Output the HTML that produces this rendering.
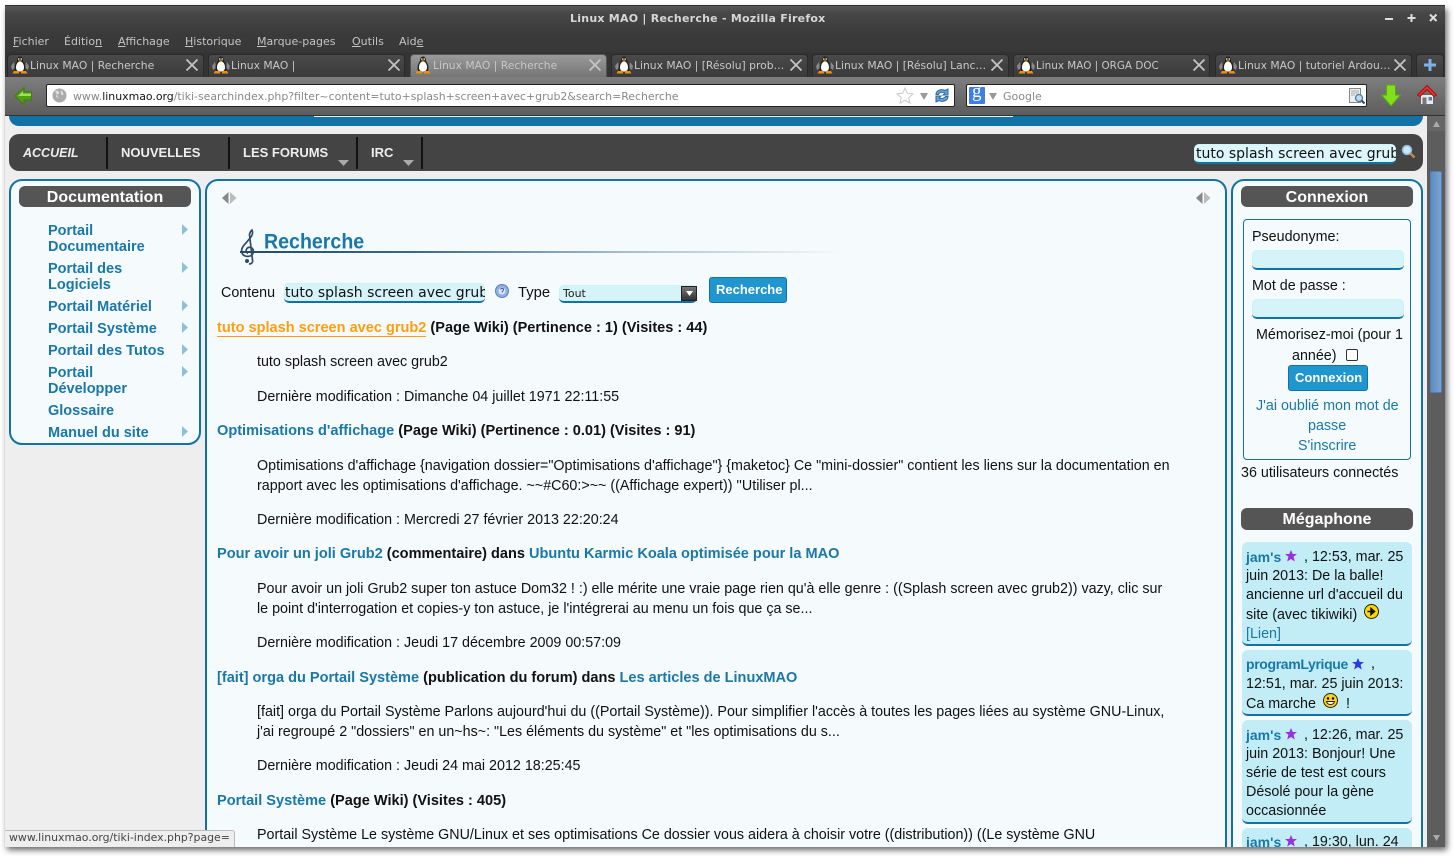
<!DOCTYPE html>
<html><head><meta charset="utf-8"><title>Linux MAO | Recherche - Mozilla Firefox</title>
<style>
html,body{margin:0;padding:0;width:1454px;height:856px;background:#fff;overflow:hidden}
#sh{position:absolute;left:5px;top:6px;width:1440px;height:841px;box-shadow:2px 3px 6px rgba(0,0,0,.6)}
#w{position:absolute;left:0;top:0;width:1454px;height:856px;clip-path:inset(5px 9px 9px 5px);background:#eee;overflow:hidden}
#w div,#w span.a,#w svg.a{position:absolute}
.t{position:absolute;white-space:nowrap;line-height:20px;font-family:"Liberation Sans",sans-serif;font-size:14.3px;color:#111;margin-top:1px}
.t.d{font-family:"DejaVu Sans",sans-serif;font-size:11px;margin-top:0}
.t.b{font-weight:bold;font-size:14.55px}
.t.n{margin-top:0}
b{font-size:14px}
.l{color:#1a78a8}
.t.m{font-weight:bold;color:#1a78a8;left:48px;font-size:14.5px;margin-top:0}
.tab{top:54px;height:23px;width:197px;box-sizing:border-box;border:1px solid #2a2a2a;border-bottom:none;border-radius:4px 4px 0 0;background:linear-gradient(#4a4a4a,#3a3a3a)}
.tab.on{background:linear-gradient(#9a9a9a,#757575);border-color:#555}
.hd{background:#555;border-radius:6px;color:#fff;font:bold 16px/23px "Liberation Sans",sans-serif;text-align:center;height:21px}
.panel{box-sizing:border-box;border:2px solid #1272a6;border-radius:13px;background:#f5fafc}
.inp{background:#d5f3f9;border-bottom:2px solid #1272a6;border-radius:5px;box-sizing:border-box;box-shadow:inset 0 0 1px #8fd}
.msg{left:1242px;width:170px;background:#c2edf7;border-bottom:2px solid #1272a6;border-radius:6px;box-sizing:border-box}
.sep{width:2px;top:137px;height:32px;background:#111}
.t.tt{top:56px;color:#c8c8c8;font-size:10.75px}
</style></head><body>
<svg width="0" height="0" style="position:absolute"><defs>
<symbol id="p" viewBox="0 0 18 18"><path d="M3 6L0 10l1 4 3-2zM15 6l3 4-1 4-3-2z" fill="#888"/><path d="M9 .5C6.500 .5 6 3 6 5 4.500 7 3.500 9.500 3.500 12c0 1.500 .5 3 1 3.500h9c.5-.5 1-2 1-3.500 0-2.500-1-5-2.500-7 0-2-.5-4.500-3-4.500z" fill="#222"/><path d="M9 5.500c2.500 0 4 3 4 6S11 15.500 9 15.500s-4-1-4-4 1.500-6 4-6z" fill="#fff"/><path d="M7 4.500h4L9 6.500z" fill="#f5a000"/><path d="M3 15h5v2.500H1.500zM10 15h5l1.500 2.500H10z" fill="#f59000"/><circle cx="7.800" cy="3" r=".8" fill="#fff"/><circle cx="10.200" cy="3" r=".8" fill="#fff"/></symbol>
<symbol id="x" viewBox="0 0 12 12"><path d="M.5.500l11 11M11.500.500l-11 11" stroke="#c4c4c4" stroke-width="1.800" fill="none"/></symbol>
<symbol id="st" viewBox="0 0 12 12"><path d="M6 0l1.700 4h4.300L8.600 6.800 9.800 11.500 6 9 2.200 11.500 3.400 6.800 0 4h4.300z"/></symbol>
</defs></svg>
<div id="sh"></div>
<div id="w">
<!-- title + tabs -->
<div style="left:5px;top:5px;width:1440px;height:49px;background:linear-gradient(#5a5a5a 0,#474747 8px,#3a3a3a 30px,#383838)"></div>
<div style="left:5px;top:5px;width:1440px;height:1px;background:#333"></div>
<div style="left:5px;top:52px;width:1440px;height:25px;background:#343434"></div>
<span class="t d" style="left:570px;top:8.500px;color:#d6d6d6;letter-spacing:.24px;font-weight:bold">Linux MAO | Recherche - Mozilla Firefox</span>
<svg class="a" style="left:1384px;top:12px" width="54" height="12"><path d="M1 7h8" stroke="#ddd" stroke-width="2"/><path d="M27.500 2v8M23.500 6h8" stroke="#ddd" stroke-width="2"/><path d="M46 2.500l6.500 6.500M52.500 2.500L46 9" stroke="#ddd" stroke-width="2"/></svg>
<span class="t d" style="left:13px;top:32px;color:#c4c4c4"><u>F</u>ichier</span>
<span class="t d" style="left:64px;top:32px;color:#c4c4c4">Éditio<u>n</u></span>
<span class="t d" style="left:118px;top:32px;color:#c4c4c4"><u>A</u>ffichage</span>
<span class="t d" style="left:185px;top:32px;color:#c4c4c4"><u>H</u>istorique</span>
<span class="t d" style="left:257px;top:32px;color:#c4c4c4"><u>M</u>arque-pages</span>
<span class="t d" style="left:352px;top:32px;color:#c4c4c4"><u>O</u>utils</span>
<span class="t d" style="left:399px;top:32px;color:#c4c4c4">Aid<u>e</u></span>

<div class="tab" style="left:7px"></div><div class="tab" style="left:208px"></div><div class="tab on" style="left:410px"></div><div class="tab" style="left:611px"></div><div class="tab" style="left:812px"></div><div class="tab" style="left:1013px"></div><div class="tab" style="left:1215px;width:197px"></div><div class="tab" style="left:1416px;width:28px"></div>
<svg class="a" style="left:11px;top:56px" width="18" height="18"><use href="#p"/></svg>
<svg class="a" style="left:212px;top:56px" width="18" height="18"><use href="#p"/></svg>
<svg class="a" style="left:414px;top:56px" width="18" height="18"><use href="#p"/></svg>
<svg class="a" style="left:615px;top:56px" width="18" height="18"><use href="#p"/></svg>
<svg class="a" style="left:816px;top:56px" width="18" height="18"><use href="#p"/></svg>
<svg class="a" style="left:1017px;top:56px" width="18" height="18"><use href="#p"/></svg>
<svg class="a" style="left:1219px;top:56px" width="18" height="18"><use href="#p"/></svg>
<span class="t d tt" style="left:30px">Linux MAO | Recherche</span>
<span class="t d tt" style="left:231px">Linux MAO |</span>
<span class="t d tt" style="left:433px">Linux MAO | Recherche</span>
<span class="t d tt" style="left:634px">Linux MAO | [Résolu] prob…</span>
<span class="t d tt" style="left:835px">Linux MAO | [Résolu] Lanc…</span>
<span class="t d tt" style="left:1036px;font-size:10.4px">Linux MAO | ORGA DOC</span>
<span class="t d tt" style="left:1238px">Linux MAO | tutoriel Ardou…</span>
<svg class="a" style="left:186px;top:59px" width="12" height="12"><use href="#x"/></svg>
<svg class="a" style="left:388px;top:59px" width="12" height="12"><use href="#x"/></svg>
<svg class="a" style="left:589px;top:59px" width="12" height="12"><use href="#x"/></svg>
<svg class="a" style="left:790px;top:59px" width="12" height="12"><use href="#x"/></svg>
<svg class="a" style="left:991px;top:59px" width="12" height="12"><use href="#x"/></svg>
<svg class="a" style="left:1193px;top:59px" width="12" height="12"><use href="#x"/></svg>
<svg class="a" style="left:1394px;top:59px" width="12" height="12"><use href="#x"/></svg>
<svg class="a" style="left:1424px;top:59px" width="12" height="12"><path d="M6 0v12M0 6h12" stroke="#7fb2ea" stroke-width="3"/></svg>

<!-- toolbar -->
<div style="left:5px;top:77px;width:1440px;height:39px;background:linear-gradient(#7e7e7e,#5c5c5c)"></div>
<div style="left:5px;top:115px;width:1440px;height:1px;background:#333"></div>
<svg class="a" style="left:14px;top:86px" width="19" height="20"><path d="M1 10L10 1.500V6h7.500v8H10v4.500z" fill="#4fa012" stroke="#3d7d10" stroke-width="1"/><path d="M4 10l5-5v2.500h8V10z" fill="#9ee05a"/></svg>
<div style="left:46px;top:84px;width:909px;height:23px;background:#fff;border:1px solid #222;box-sizing:border-box;border-radius:2px"></div>
<svg class="a" style="left:52px;top:88px" width="15" height="15"><circle cx="7.500" cy="7.500" r="7" fill="#aaa"/><path d="M3 3c2-1 4 0 4 2S4 6 4 8s3 1 3 3M9 2c2 2 3 4 2 5S8 6 9 2" fill="#ddd"/></svg>
<span class="t d" style="left:73px;top:87px;color:#888;font-size:10.92px">www.<span style="color:#111">linuxmao.org</span>/tiki-searchindex.php?filter~content=tuto+splash+screen+avec+grub2&amp;search=Recherche</span>
<svg class="a" style="left:896px;top:87px" width="18" height="17"><path d="M9 1l2.300 5.300 5.700.5-4.300 3.800 1.300 5.600L9 13.200 4 16.200l1.300-5.600L1 6.800l5.700-.5z" fill="#fff" stroke="#ccc"/></svg>
<svg class="a" style="left:920px;top:93px" width="9" height="7"><path d="M0 0h8L4 7z" fill="#999"/></svg>
<svg class="a" style="left:934px;top:87px" width="16" height="17"><path d="M2 7.500c0-4 5-6 9-4l3-1.500v6H9l2-2C8 4.500 5 5.500 4.500 7.500zM14 9.500c0 4-5 6-9 4l-3 1.500V9h5l-2 2c3 1 6 0 6.500-1.500z" fill="#6aa4d8" stroke="#2a67a3"/></svg>
<div style="left:966px;top:84px;width:401px;height:23px;background:#fff;border:1px solid #222;box-sizing:border-box;border-radius:2px"></div>
<div style="left:969px;top:87px;width:16px;height:17px;background:#3f7de8;border-radius:1px"></div>
<span class="t n" style="left:972px;top:82px;color:#fff;font:19px/20px 'Liberation Serif',serif">g</span>
<svg class="a" style="left:989px;top:93px" width="9" height="7"><path d="M0 0h8L4 7z" fill="#999"/></svg>
<span class="t d" style="left:1003px;top:87px;color:#888">Google</span>
<svg class="a" style="left:1349px;top:88px" width="17" height="17"><path d="M.5.500h11v14H.5z" fill="#eee" stroke="#888"/><path d="M2 3h8M2 5h8M2 7h4" stroke="#aaa"/><circle cx="10" cy="10" r="3.500" fill="#bcd9f0" stroke="#4d7ea8" stroke-width="1.300"/><path d="M12.500 12.500l3 3" stroke="#345" stroke-width="2"/></svg>
<svg class="a" style="left:1381px;top:84px" width="20" height="23"><path d="M5.500 1h9v10h5L10 22 .5 11h5z" fill="#82df1e" stroke="#59a813"/></svg>
<svg class="a" style="left:1417px;top:84px" width="20" height="22"><path d="M3.500 10.500h13v10h-13z" fill="#eaeaea" stroke="#666"/><path d="M.5 11L10 1.500l9.500 9.500-2.500 1.500L10 5.500 3 12.500z" fill="#f03030" stroke="#a01010"/><path d="M11.500 13h3.500v3.500h-3.500z" fill="#5582ad"/><path d="M5.500 13.500h4v7h-4z" fill="#777"/></svg>

<!-- page top -->
<div style="left:9px;top:116px;width:1414px;height:10px;background:#1272a6;border-radius:0 0 10px 10px"></div>
<div style="left:314px;top:116px;width:699px;height:1px;background:#e8f2f6"></div>
<div style="left:9px;top:134px;width:1414px;height:37px;background:#444;border-radius:10px"></div>
<span class="t n" style="left:23px;top:143px;color:#eee;font-size:12.5px;font-weight:bold;font-style:italic">ACCUEIL</span>
<span class="t n" style="left:121px;top:143px;color:#eee;font-size:13px;font-weight:bold">NOUVELLES</span>
<span class="t n" style="left:243px;top:143px;color:#eee;font-size:13px;font-weight:bold">LES FORUMS</span>
<span class="t n" style="left:371px;top:143px;color:#eee;font-size:13px;font-weight:bold">IRC</span>
<div class="sep" style="left:106px"></div><div class="sep" style="left:228px"></div><div class="sep" style="left:356px"></div><div class="sep" style="left:421px"></div>
<svg class="a" style="left:338px;top:160px" width="11" height="6"><path d="M0 0h11L5.500 6z" fill="#aaa"/></svg>
<svg class="a" style="left:403px;top:160px" width="11" height="6"><path d="M0 0h11L5.500 6z" fill="#aaa"/></svg>
<div class="inp" style="left:1194px;top:144px;width:202px;height:20px;background:#dcf6fb;overflow:hidden"><span class="t d" style="left:2px;top:0;font-size:14px;color:#111">tuto splash screen avec grub2</span></div>
<svg class="a" style="left:1401px;top:144px" width="15" height="15"><circle cx="6" cy="6" r="4.500" fill="#cfe6fa" stroke="#8ab8e0" stroke-width="1.500"/><path d="M9.500 9.500l4 4" stroke="#c08a3a" stroke-width="2.500"/></svg>

<!-- left panel -->
<div class="panel" style="left:9px;top:179px;width:192px;height:266px"></div>
<div class="hd" style="left:19px;top:186px;width:172px">Documentation</div>
<span class="t m" style="top:221px">Portail</span>
<span class="t m" style="top:237px">Documentaire</span>
<span class="t m" style="top:259px">Portail des</span>
<span class="t m" style="top:275px">Logiciels</span>
<span class="t m" style="top:297px">Portail Matériel</span>
<span class="t m" style="top:319px">Portail Système</span>
<span class="t m" style="top:341px">Portail des Tutos</span>
<span class="t m" style="top:363px">Portail</span>
<span class="t m" style="top:379px">Développer</span>
<span class="t m" style="top:401px">Glossaire</span>
<span class="t m" style="top:423px">Manuel du site</span>
<svg class="a" style="left:182px;top:224px" width="6" height="11"><path d="M0 0l6 5.500L0 11z" fill="#8fc0da"/></svg>
<svg class="a" style="left:182px;top:262px" width="6" height="11"><path d="M0 0l6 5.500L0 11z" fill="#8fc0da"/></svg>
<svg class="a" style="left:182px;top:300px" width="6" height="11"><path d="M0 0l6 5.500L0 11z" fill="#8fc0da"/></svg>
<svg class="a" style="left:182px;top:322px" width="6" height="11"><path d="M0 0l6 5.500L0 11z" fill="#8fc0da"/></svg>
<svg class="a" style="left:182px;top:344px" width="6" height="11"><path d="M0 0l6 5.500L0 11z" fill="#8fc0da"/></svg>
<svg class="a" style="left:182px;top:366px" width="6" height="11"><path d="M0 0l6 5.500L0 11z" fill="#8fc0da"/></svg>
<svg class="a" style="left:182px;top:426px" width="6" height="11"><path d="M0 0l6 5.500L0 11z" fill="#8fc0da"/></svg>

<!-- center panel -->
<div class="panel" style="left:205px;top:179px;width:1022px;height:700px"></div>
<svg class="a" style="left:222px;top:192px" width="15" height="13"><path d="M6.500 0v12L0 6z" fill="#888"/><path d="M8 0v12l6.500-6z" fill="#bbb"/></svg>
<svg class="a" style="left:1196px;top:192px" width="15" height="13"><path d="M6.500 0v12L0 6z" fill="#888"/><path d="M8 0v12l6.500-6z" fill="#bbb"/></svg>
<div style="left:240px;top:251px;width:600px;height:2px;background:linear-gradient(90deg,#1c4a70,#3f6a8c 30%,#aac0cf 65%,rgba(245,250,252,0))"></div>
<svg class="a" style="left:240px;top:229px" width="17" height="36"><path d="M9 35c3 0 4-2 3.500-4L9.500 6c0-2 1.500-4.500 2.500-5 1 2 .5 5-1 7L5 15c-3 3-4 6-3 9s5 4 8 3 4-4 3-6.500-4.500-3-6-1-1 4 1 5" fill="none" stroke="#2f4d68" stroke-width="1.700"/><circle cx="7" cy="32" r="2" fill="#2f4d68"/></svg>
<span class="t n" style="left:264px;top:232px;font-size:19.6px;font-weight:bold;color:#1a78a8;display:inline-block;transform:scaleY(1.08)">Recherche</span>
<span class="t" style="left:221px;top:282px">Contenu</span>
<div class="inp" style="left:284px;top:283px;width:201px;height:20px;overflow:hidden"><span class="t d" style="left:1px;top:0;font-size:14px;color:#111">tuto splash screen avec grub2</span></div>
<svg class="a" style="left:495px;top:284px" width="14" height="14"><circle cx="7" cy="7" r="6.500" fill="#8fb0e0" stroke="#5d7fba"/><circle cx="7" cy="7" r="3.500" fill="#fff" opacity=".7"/><path d="M5.500 5.500c.5-1.500 3-1.500 3 0S7 7 7 8.500" stroke="#3c5ca0" fill="none"/></svg>
<span class="t" style="left:518px;top:282px;font-size:14.8px">Type</span>
<div class="inp" style="left:559px;top:285px;width:138px;height:18px"><span class="t d" style="left:4px;top:-1px;color:#222">Tout</span></div>
<div style="left:681px;top:286px;width:16px;height:15px;background:linear-gradient(#777,#333);border:1px solid #222;box-sizing:border-box"></div>
<svg class="a" style="left:686px;top:291px" width="7" height="5"><path d="M0 0h7L3.500 5z" fill="#fff"/></svg>
<div style="left:709px;top:277px;width:78px;height:26px;background:#2096cf;border:1px solid #1272a6;border-radius:3px;box-sizing:border-box"></div>
<span class="t n" style="left:716px;top:280px;color:#fff;font-size:13px;font-weight:bold">Recherche</span>

<span class="t b" style="left:217px;top:317px"><span style="color:#ff9e0d;border-bottom:1px solid #ff9e0d">tuto splash screen avec grub2</span> (Page Wiki) (Pertinence : 1) (Visites : 44)</span>
<span class="t" style="left:257px;top:351px">tuto splash screen avec grub2</span>
<span class="t" style="left:257px;top:386px">Dernière modification : Dimanche 04 juillet 1971 22:11:55</span>
<span class="t b" style="left:217px;top:420px"><span class="l">Optimisations d'affichage</span> (Page Wiki) (Pertinence : 0.01) (Visites : 91)</span>
<span class="t" style="left:257px;top:455px">Optimisations d'affichage {navigation dossier="Optimisations d'affichage"} {maketoc} Ce "mini-dossier" contient les liens sur la documentation en</span>
<span class="t" style="left:257px;top:475px">rapport avec les optimisations d'affichage. ~~#C60:&gt;~~ ((Affichage expert)) ''Utiliser pl...</span>
<span class="t" style="left:257px;top:509px">Dernière modification : Mercredi 27 février 2013 22:20:24</span>
<span class="t b" style="left:217px;top:543px"><span class="l">Pour avoir un joli Grub2</span> (commentaire) dans <span class="l">Ubuntu Karmic Koala optimisée pour la MAO</span></span>
<span class="t" style="left:257px;top:578px">Pour avoir un joli Grub2 super ton astuce Dom32 ! :) elle mérite une vraie page rien qu'à elle genre : ((Splash screen avec grub2)) vazy, clic sur</span>
<span class="t" style="left:257px;top:598px">le point d'interrogation et copies-y ton astuce, je l'intégrerai au menu un fois que ça se...</span>
<span class="t" style="left:257px;top:632px">Dernière modification : Jeudi 17 décembre 2009 00:57:09</span>
<span class="t b" style="left:217px;top:667px"><span class="l">[fait] orga du Portail Système</span> (publication du forum) dans <span class="l">Les articles de LinuxMAO</span></span>
<span class="t" style="left:257px;top:701px">[fait] orga du Portail Système Parlons aujourd'hui du ((Portail Système)). Pour simplifier l'accès à toutes les pages liées au système GNU-Linux,</span>
<span class="t" style="left:257px;top:721px">j'ai regroupé 2 "dossiers" en un~hs~: "Les éléments du système" et "les optimisations du s...</span>
<span class="t" style="left:257px;top:755px">Dernière modification : Jeudi 24 mai 2012 18:25:45</span>
<span class="t b" style="left:217px;top:790px"><span class="l">Portail Système</span> (Page Wiki) (Visites : 405)</span>
<span class="t" style="left:257px;top:824px">Portail Système Le système GNU/Linux et ses optimisations Ce dossier vous aidera à choisir votre ((distribution)) ((Le système GNU</span>

<!-- right panel -->
<div class="panel" style="left:1231px;top:179px;width:192px;height:700px"></div>
<div class="hd" style="left:1241px;top:186px;width:172px">Connexion</div>
<div style="left:1243px;top:219px;width:168px;height:241px;border:1px solid #1272a6;border-radius:4px;box-sizing:border-box"></div>
<span class="t" style="left:1252px;top:226px">Pseudonyme:</span>
<div class="inp" style="left:1252px;top:250px;width:152px;height:20px"></div>
<span class="t" style="left:1252px;top:275px">Mot de passe :</span>
<div class="inp" style="left:1252px;top:299px;width:152px;height:20px"></div>
<span class="t" style="left:1256px;top:324px">Mémorisez-moi (pour 1</span>
<span class="t" style="left:1292px;top:345px">année)</span>
<div style="left:1346px;top:349px;width:12px;height:12px;background:#fff;border:1px solid #333;border-radius:2px;box-sizing:border-box"></div>
<div style="left:1288px;top:365px;width:80px;height:26px;background:#2096cf;border:1px solid #1272a6;border-radius:3px;box-sizing:border-box"></div>
<span class="t n" style="left:1295px;top:368px;color:#fff;font-size:13px;font-weight:bold">Connexion</span>
<span class="t l" style="left:1256px;top:395px">J'ai oublié mon mot de</span>
<span class="t l" style="left:1308px;top:415px">passe</span>
<span class="t l" style="left:1298px;top:435px">S'inscrire</span>
<span class="t" style="left:1241px;top:462px">36 utilisateurs connectés</span>
<div class="hd" style="left:1241px;top:508px;width:172px;height:22px">Mégaphone</div>

<div class="msg" style="top:542px;height:104px"></div>
<div class="msg" style="top:650px;height:66px"></div>
<div class="msg" style="top:720px;height:104px"></div>
<div class="msg" style="top:828px;height:40px"></div>
<span class="t" style="left:1246px;top:546px"><b class="l">jam's</b></span>
<svg class="a" style="left:1285px;top:550px;fill:#9a30e0" width="12" height="12"><use href="#st"/></svg>
<span class="t" style="left:1304px;top:546px">, 12:53, mar. 25</span>
<span class="t" style="left:1246px;top:565px">juin 2013: De la balle!</span>
<span class="t" style="left:1246px;top:584px">ancienne url d'accueil du</span>
<span class="t" style="left:1246px;top:604px">site (avec tikiwiki)</span>
<svg class="a" style="left:1364px;top:604px" width="15" height="15"><circle cx="7.500" cy="7.500" r="7" fill="#ffd800" stroke="#222"/><path d="M3.500 7.500h5M7 4.500l3.500 3L7 10.500z" stroke="#111" fill="#111" stroke-width="1.500"/></svg>
<span class="t l" style="left:1246px;top:623px">[Lien]</span>
<span class="t" style="left:1246px;top:653px"><b class="l" style="letter-spacing:-.35px">programLyrique</b></span>
<svg class="a" style="left:1352px;top:658px;fill:#2a3ae8" width="12" height="12"><use href="#st"/></svg>
<span class="t" style="left:1371px;top:653px">,</span>
<span class="t" style="left:1246px;top:673px">12:51, mar. 25 juin 2013:</span>
<span class="t" style="left:1246px;top:693px">Ca marche</span>
<svg class="a" style="left:1323px;top:693px" width="15" height="15"><circle cx="7.500" cy="7.500" r="7" fill="#ffd21a" stroke="#222"/><circle cx="5" cy="5.500" r="1.200"/><circle cx="10" cy="5.500" r="1.200"/><path d="M3.500 8.500c1 4 7 4 8 0z" fill="#fff" stroke="#222"/></svg>
<span class="t" style="left:1346px;top:693px">!</span>
<span class="t" style="left:1246px;top:724px"><b class="l">jam's</b></span>
<svg class="a" style="left:1285px;top:728px;fill:#9a30e0" width="12" height="12"><use href="#st"/></svg>
<span class="t" style="left:1304px;top:724px">, 12:26, mar. 25</span>
<span class="t" style="left:1246px;top:743px">juin 2013: Bonjour! Une</span>
<span class="t" style="left:1246px;top:762px">série de test est cours</span>
<span class="t" style="left:1246px;top:781px">Désolé pour la gène</span>
<span class="t" style="left:1246px;top:800px">occasionnée</span>
<span class="t" style="left:1246px;top:831px"><b class="l">jam's</b></span>
<svg class="a" style="left:1285px;top:835px;fill:#9a30e0" width="12" height="12"><use href="#st"/></svg>
<span class="t" style="left:1304px;top:831px">, 19:30, lun. 24</span>

<!-- scrollbar -->
<div style="left:1427px;top:116px;width:18px;height:732px;background:#5d5d5d"></div>
<div style="left:1427px;top:116px;width:18px;height:15px;background:#666"></div>
<svg class="a" style="left:1433px;top:121px" width="7" height="6"><path d="M0 6h7L3.500 0z" fill="#aaa"/></svg>
<svg class="a" style="left:1433px;top:835px" width="7" height="6"><path d="M0 0h7L3.500 6z" fill="#aaa"/></svg>
<div style="left:1430px;top:171px;width:12px;height:222px;background:linear-gradient(90deg,#5e8dc4,#7ba4d0);border:1px solid #4f7fb5;box-sizing:border-box;border-radius:2px"></div>

<!-- status -->
<div style="left:5px;top:830px;width:230px;height:18px;background:#eee;border:1px solid #bbb;border-left:none;border-bottom:none;box-sizing:border-box;border-radius:0 3px 0 0"></div>
<span class="t d" style="left:9px;top:828px;color:#444;font-size:10.9px">www.linuxmao.org/tiki-index.php?page=</span>
</div>
</body></html>
